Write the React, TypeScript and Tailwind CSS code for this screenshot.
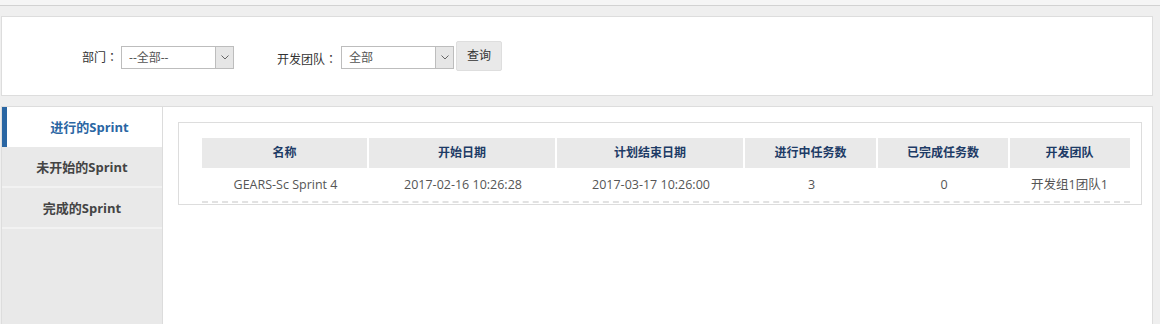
const font = "font-['Microsoft_YaHei','Open_Sans','Noto_Sans_CJK_SC',sans-serif]"

const columns = ['名称', '开始日期', '计划结束日期', '进行中任务数', '已完成任务数', '开发团队']
const widths = ['w-[167px]', 'w-[188px]', 'w-[188px]', 'w-[133px]', 'w-[132px]', 'w-[119px]']
const row = ['GEARS-Sc Sprint 4', '2017-02-16 10:26:28', '2017-03-17 10:26:00', '3', '0', '开发组1团队1']

const tabs = ['进行的Sprint', '未开始的Sprint', '完成的Sprint']

function FakeSelect({ value }: { value: string }) {
  return (
    <div className="flex h-[23px] w-[113px] items-stretch border border-[#bdbdbd] bg-white">
      <span className="flex-1 pl-[7px] text-[12px] leading-[21px] text-[#555]">{value}</span>
      <span className="flex w-[18px] items-center justify-center border-l border-[#bdbdbd] bg-[#e6e6e6]">
        <svg width="8" height="5" viewBox="0 0 8 5" fill="none">
          <path d="M0.5 0.5 L4 4 L7.5 0.5" stroke="#666" strokeWidth="1" />
        </svg>
      </span>
    </div>
  )
}

function Label({ text }: { text: string }) {
  return (
    <span className="text-[12px] text-[#333]">
      {text}
      <span className="font-['Noto_Sans_CJK_TC',sans-serif]">：</span>
    </span>
  )
}

export default function App() {
  return (
    <div className={`h-[324px] w-[1160px] overflow-hidden bg-[#efefef] ${font}`}>
      <div className="h-[6px] border-b border-[#d2d2d2] bg-[#f5f5f5]" />

      {/* filter bar */}
      <div className="ml-[1px] mr-[7px] mt-[10px] flex h-[80px] items-center border border-[#dddddd] bg-white pl-[80px] pt-[3px]">
        <Label text="部门" />
        <span className="ml-[3px]">
          <FakeSelect value="--全部--" />
        </span>
        <span className="ml-[43px]">
          <Label text="开发团队" />
        </span>
        <span className="ml-[4px]">
          <FakeSelect value="全部" />
        </span>
        <button className="-mt-[3px] ml-[2px] h-[30px] w-[46px] rounded-[2px] border border-[#dedede] bg-[#e9e9e9] text-[12px] text-[#333]">
          查询
        </button>
      </div>

      {/* main panel */}
      <div className="ml-[1px] mr-[7px] mt-[10px] flex h-[230px] border border-[#dddddd] bg-white">
        <div className="w-[161px] border-r border-[#dcdcdc] bg-[#e9e9e9]">
          {tabs.map((t, i) =>
            i === 0 ? (
              <div
                key={t}
                className="flex h-[40px] items-center justify-center border-l-[5px] border-[#2a66a3] bg-white pl-[10px] pt-[1px] text-[13px] font-bold text-[#2a66a3]"
              >
                {t}
              </div>
            ) : (
              <div
                key={t}
                className="flex h-[41px] items-center justify-center border-b-2 border-[#f2f2f2] pt-[3px] text-[13px] font-bold text-[#444]"
              >
                {t}
              </div>
            )
          )}
        </div>

        <div className="pl-[15px] pt-[15px]">
          <div className="w-[964px] border border-[#dddddd] pb-[1px] pl-[23px] pr-[11px] pt-[15px]">
            <div className="flex h-[30px] bg-[#e9e9e9]">
              {columns.map((c, i) => (
                <div
                  key={c}
                  className={`${widths[i]} flex items-center justify-center text-[12px] font-bold text-[#1d3b66] ${
                    i < columns.length - 1 ? 'border-r-2 border-white' : ''
                  }`}
                >
                  {c}
                </div>
              ))}
            </div>
            <div className="flex h-[35px] border-b-2 border-dashed border-[#e2e2e2] pt-[1px]">
              {row.map((v, i) => (
                <div key={i} className={`${widths[i]} flex items-center justify-center text-[12.5px] text-[#555]`}>
                  {v}
                </div>
              ))}
            </div>
          </div>
        </div>
      </div>
    </div>
  )
}
